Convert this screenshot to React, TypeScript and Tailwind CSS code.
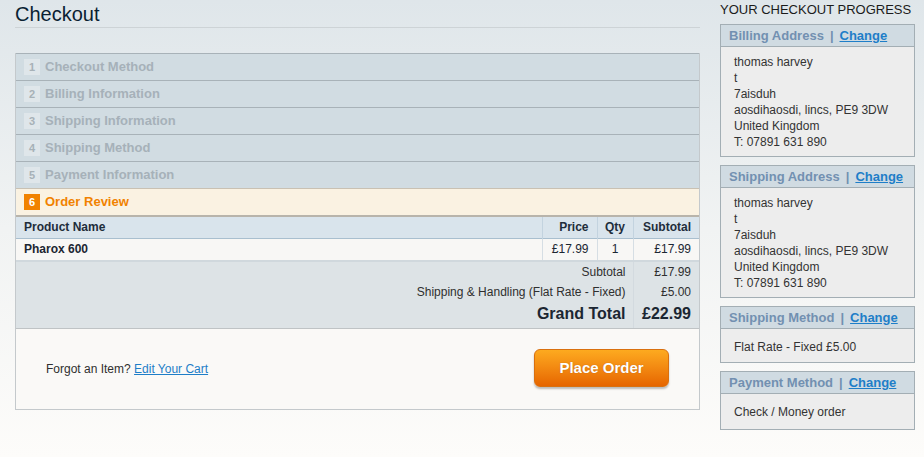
import React from 'react';

type Step = { n: number; label: string; active?: boolean };

const STEPS: Step[] = [
  { n: 1, label: 'Checkout Method' },
  { n: 2, label: 'Billing Information' },
  { n: 3, label: 'Shipping Information' },
  { n: 4, label: 'Shipping Method' },
  { n: 5, label: 'Payment Information' },
  { n: 6, label: 'Order Review', active: true },
];

const ADDRESS = ['thomas harvey', 't', '7aisduh', 'aosdihaosdi, lincs, PE9 3DW', 'United Kingdom', 'T: 07891 631 890'];

function StepRow({ step }: { step: Step }) {
  if (step.active) {
    return (
      <div className="h-[27px] flex items-center bg-[#faf2e2] border-t border-[#c9c1b3] pl-[8px]">
        <span className="w-[16px] h-[16px] bg-[#f18200] text-white text-[11px] font-bold flex items-center justify-center">
          {step.n}
        </span>
        <span className="ml-[5px] text-[13px] font-bold text-[#f18200]">{step.label}</span>
      </div>
    );
  }
  return (
    <div className="h-[27px] flex items-center bg-[#d1dce2] border-t border-[#a8b2b8] pl-[8px]">
      <span className="w-[16px] h-[16px] bg-[#dfe6ea] text-[#a7b1b7] text-[11px] font-bold flex items-center justify-center">
        {step.n}
      </span>
      <span className="ml-[5px] text-[13px] font-bold text-[#a6b1b9]">{step.label}</span>
    </div>
  );
}

function SideBox({ title, children }: { title: string; children: React.ReactNode }) {
  return (
    <div className="border border-[#a3aeb4] bg-[#ededed] mb-[8px]">
      <div className="h-[22px] flex items-center bg-[#d0dbe2] border-b border-[#a3aeb4] pl-[8px] text-[13px] font-bold">
        <span className="text-[#7290b1]">{title}</span>
        <span className="mx-[6px] text-[#7290b1]">|</span>
        <a className="text-[#1e7ec8] underline">Change</a>
      </div>
      <div className="px-[13px] text-[12px] leading-[16px] text-[#333]">{children}</div>
    </div>
  );
}

export default function App() {
  return (
    <div
      className="w-full h-[457px] overflow-hidden bg-linear-to-b from-[#dfe6ea] via-[#f1f3f3] to-[#fdfcfa] text-[12px] text-[#2f2f2f]"
      style={{ fontFamily: '"Liberation Sans", Arial, sans-serif' }}
    >
      <div className="flex">
        <div className="ml-[15px] w-[685px]">
          <div className="h-[28px] border-b border-[#cdd3d6]">
            <h1 className="text-[20px] leading-[24px] pt-[2px] text-[#0a1f33]">Checkout</h1>
          </div>

          <div className="mt-[25px] border-x border-b border-[#c4c9cc]">
            <div>
              {STEPS.map((s) => (
                <StepRow key={s.n} step={s} />
              ))}
            </div>

            <table className="w-full border-collapse border-t-2 border-[#b8b4ab] text-[12px]">
              <thead>
                <tr className="bg-[#d9e4ec] h-[22px] border-b border-[#a9bfcf] text-[#1e2d3b] font-bold">
                  <th className="text-left pl-[8px] font-bold">Product Name</th>
                  <th className="w-[55px] text-right pr-[8px] border-l border-[#c3d3df] font-bold">Price</th>
                  <th className="w-[36px] text-center border-l border-[#c3d3df] font-bold">Qty</th>
                  <th className="w-[66px] text-right pr-[8px] border-l border-[#c3d3df] font-bold">Subtotal</th>
                </tr>
              </thead>
              <tbody>
                <tr className="bg-[#f8f7f5] h-[23px] border-b-2 border-[#d0d8dd] text-[#1b2632]">
                  <td className="pl-[8px] font-bold">Pharox 600</td>
                  <td className="text-right pr-[8px] border-l border-[#d6dee4]">£17.99</td>
                  <td className="text-center border-l border-[#d6dee4]">1</td>
                  <td className="text-right pr-[8px] border-l border-[#d6dee4]">£17.99</td>
                </tr>
              </tbody>
              <tfoot className="bg-[#dde3e6] text-[#2f2f2f]">
                <tr className="h-[20px]">
                  <td colSpan={3} className="text-right pr-[7px] pt-[1px]">Subtotal</td>
                  <td className="text-right pr-[8px] pt-[1px] border-l border-[#d3dadf]">£17.99</td>
                </tr>
                <tr className="h-[21px]">
                  <td colSpan={3} className="text-right pr-[7px]">Shipping &amp; Handling (Flat Rate - Fixed)</td>
                  <td className="text-right pr-[8px] border-l border-[#d3dadf]">£5.00</td>
                </tr>
                <tr className="h-[24px] text-[16px] font-bold text-[#1b2632]">
                  <td colSpan={3} className="text-right pr-[7px] pb-[2px]">Grand Total</td>
                  <td className="text-right pr-[8px] pb-[2px] border-l border-[#d3dadf]">£22.99</td>
                </tr>
              </tfoot>
            </table>

            <div className="h-[81px] bg-[#faf9f7] border-t border-[#bfc3c5] flex items-center justify-between pl-[30px] pr-[30px]">
              <p className="text-[12px] text-[#2f2f2f]">
                Forgot an Item? <a className="text-[#1e7ec8] underline">Edit Your Cart</a>
              </p>
              <button className="w-[135px] h-[38px] mb-[2px] rounded-[6px] border border-[#d9700f] bg-linear-to-b from-[#fdaa1f] to-[#e66500] text-white text-[15px] font-bold shadow-[0_2px_2px_rgba(0,0,0,0.25)] [text-shadow:0_0_1px_rgba(120,50,0,0.5)]">
                Place Order
              </button>
            </div>
          </div>
        </div>

        <div className="ml-[20px] w-[195px]">
          <h2 className="text-[13px] leading-[16px] pt-[2px] uppercase text-[#1b1b1b] h-[24px]">Your Checkout Progress</h2>
          <SideBox title="Billing Address">
            <div className="pt-[7px] pb-[6px]">
              {ADDRESS.map((l, i) => (
                <div key={i}>{l}</div>
              ))}
            </div>
          </SideBox>
          <SideBox title="Shipping Address">
            <div className="pt-[7px] pb-[6px]">
              {ADDRESS.map((l, i) => (
                <div key={i}>{l}</div>
              ))}
            </div>
          </SideBox>
          <SideBox title="Shipping Method">
            <div className="pt-[10px] pb-[7px]">Flat Rate - Fixed £5.00</div>
          </SideBox>
          <SideBox title="Payment Method">
            <div className="pt-[10px] pb-[9px]">Check / Money order</div>
          </SideBox>
        </div>
      </div>
    </div>
  );
}
